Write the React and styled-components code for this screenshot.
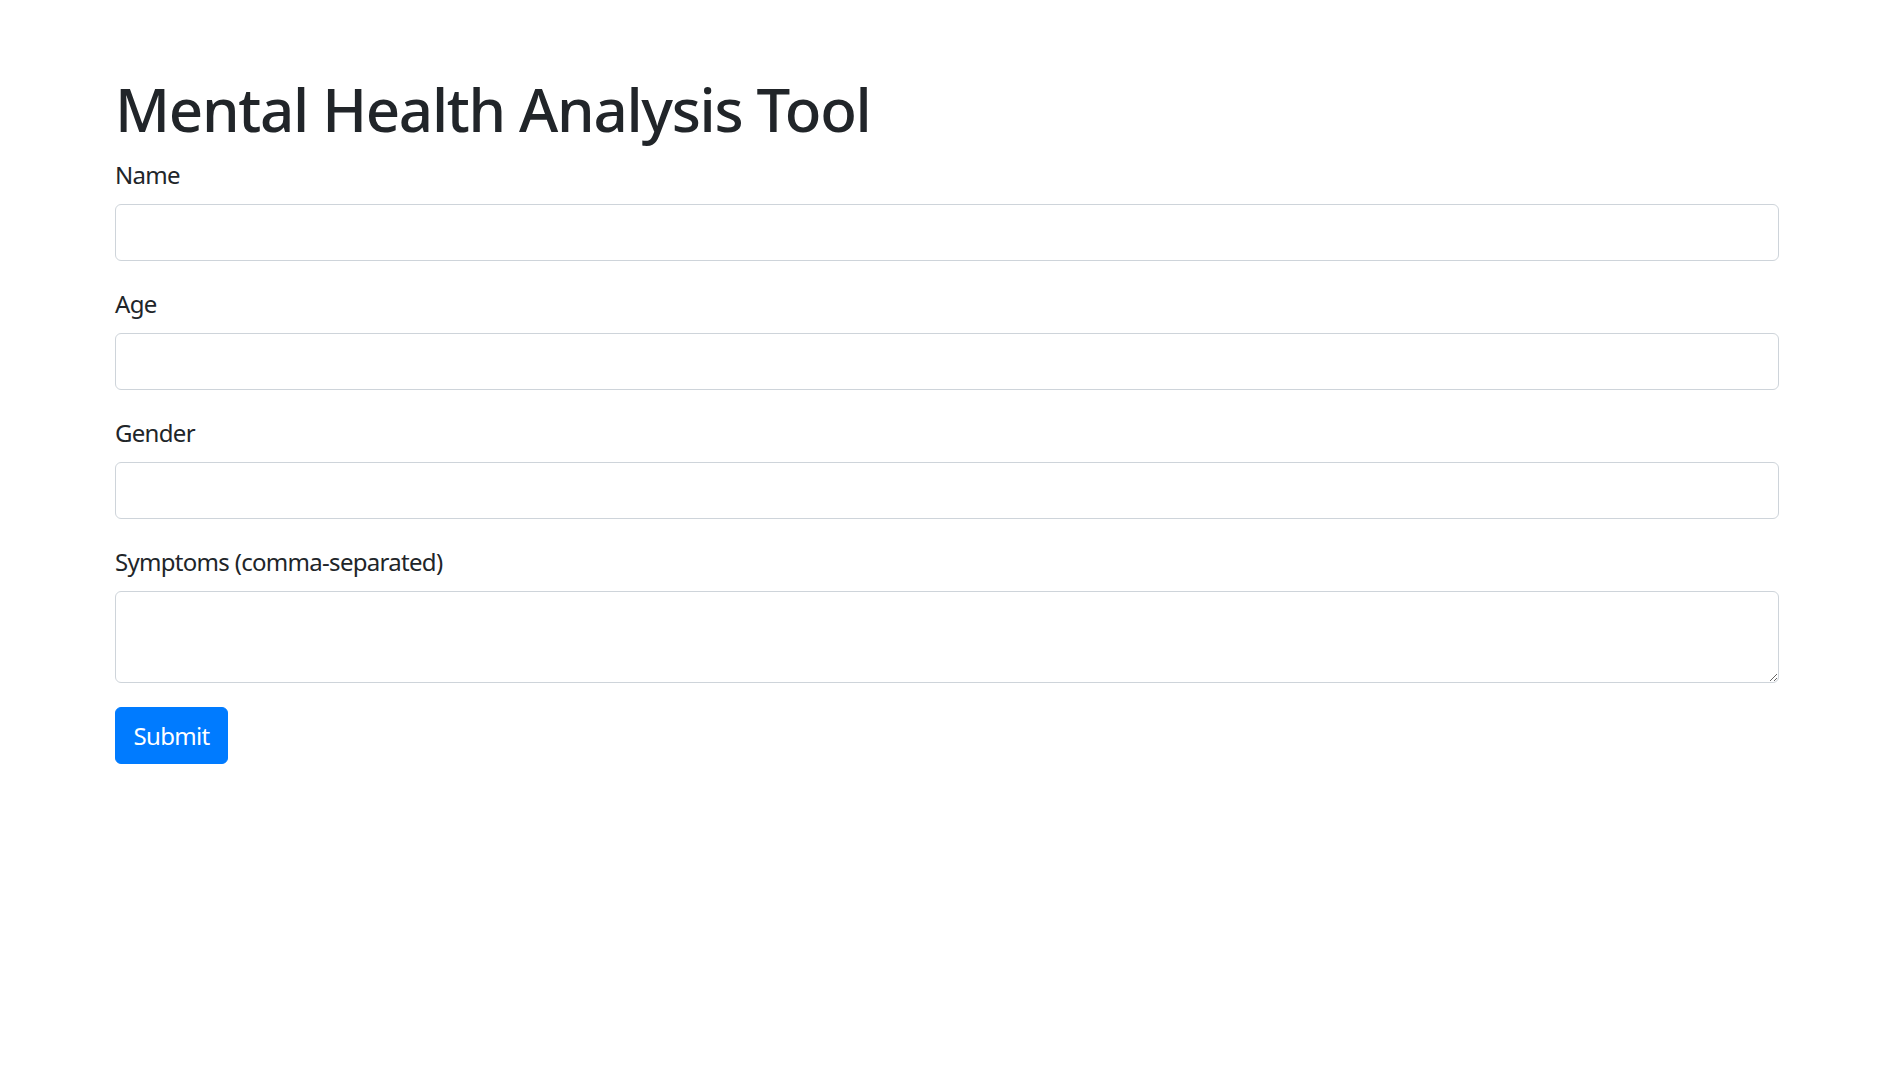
import React from 'react';
import styled, { createGlobalStyle } from 'styled-components';

const GlobalStyle = createGlobalStyle`
  html, body {
    margin: 0;
    padding: 0;
    background: #fff;
  }
  body {
    font-family: "Segoe UI", "Noto Sans", "Open Sans", sans-serif;
    color: #212529;
  }
  *, *::before, *::after {
    box-sizing: border-box;
  }
`;

const Container = styled.div`
  padding: 73px 108px 0 115px;
`;

const Title = styled.h1`
  margin: 0 0 11px 0;
  font-size: 60px;
  font-weight: 500;
  line-height: 1.2;
  letter-spacing: -1.3px;
`;

const Form = styled.form`
  display: flex;
  flex-direction: column;
`;

const FormGroup = styled.div`
  margin-bottom: 24px;
  display: flex;
  flex-direction: column;
`;

const Label = styled.label`
  font-size: 24px;
  line-height: 36px;
  padding-top: 1px;
  margin-bottom: 11px;
  letter-spacing: -0.7px;
`;

const fieldStyle = `
  display: block;
  width: 100%;
  padding: 9px 18px;
  font-family: inherit;
  font-size: 24px;
  line-height: 36px;
  color: #495057;
  background: #fff;
  border: 1.5px solid #ced4da;
  border-radius: 6px;
  outline: none;
`;

const Input = styled.input`
  ${fieldStyle}
  height: 57px;
`;

const TextArea = styled.textarea`
  ${fieldStyle}
  height: 92px;
  resize: vertical;
`;

const SubmitButton = styled.button`
  align-self: flex-start;
  width: 113px;
  height: 57px;
  padding: 9px 0;
  font-family: inherit;
  font-size: 24px;
  line-height: 36px;
  letter-spacing: -0.7px;
  color: #fff;
  background: #007bff;
  border: 1.5px solid #007bff;
  border-radius: 6px;
  cursor: pointer;
`;

const Field = ({ label, id, area }) => (
  <FormGroup>
    <Label htmlFor={id}>{label}</Label>
    {area ? <TextArea id={id} rows={2} /> : <Input id={id} type="text" />}
  </FormGroup>
);

const App = () => (
  <>
    <GlobalStyle />
    <Container>
      <Title>Mental Health Analysis Tool</Title>
      <Form onSubmit={(e) => e.preventDefault()}>
        <Field label="Name" id="name" />
        <Field label="Age" id="age" />
        <Field label="Gender" id="gender" />
        <Field label="Symptoms (comma-separated)" id="symptoms" area />
        <SubmitButton type="submit">Submit</SubmitButton>
      </Form>
    </Container>
  </>
);

export default App;
